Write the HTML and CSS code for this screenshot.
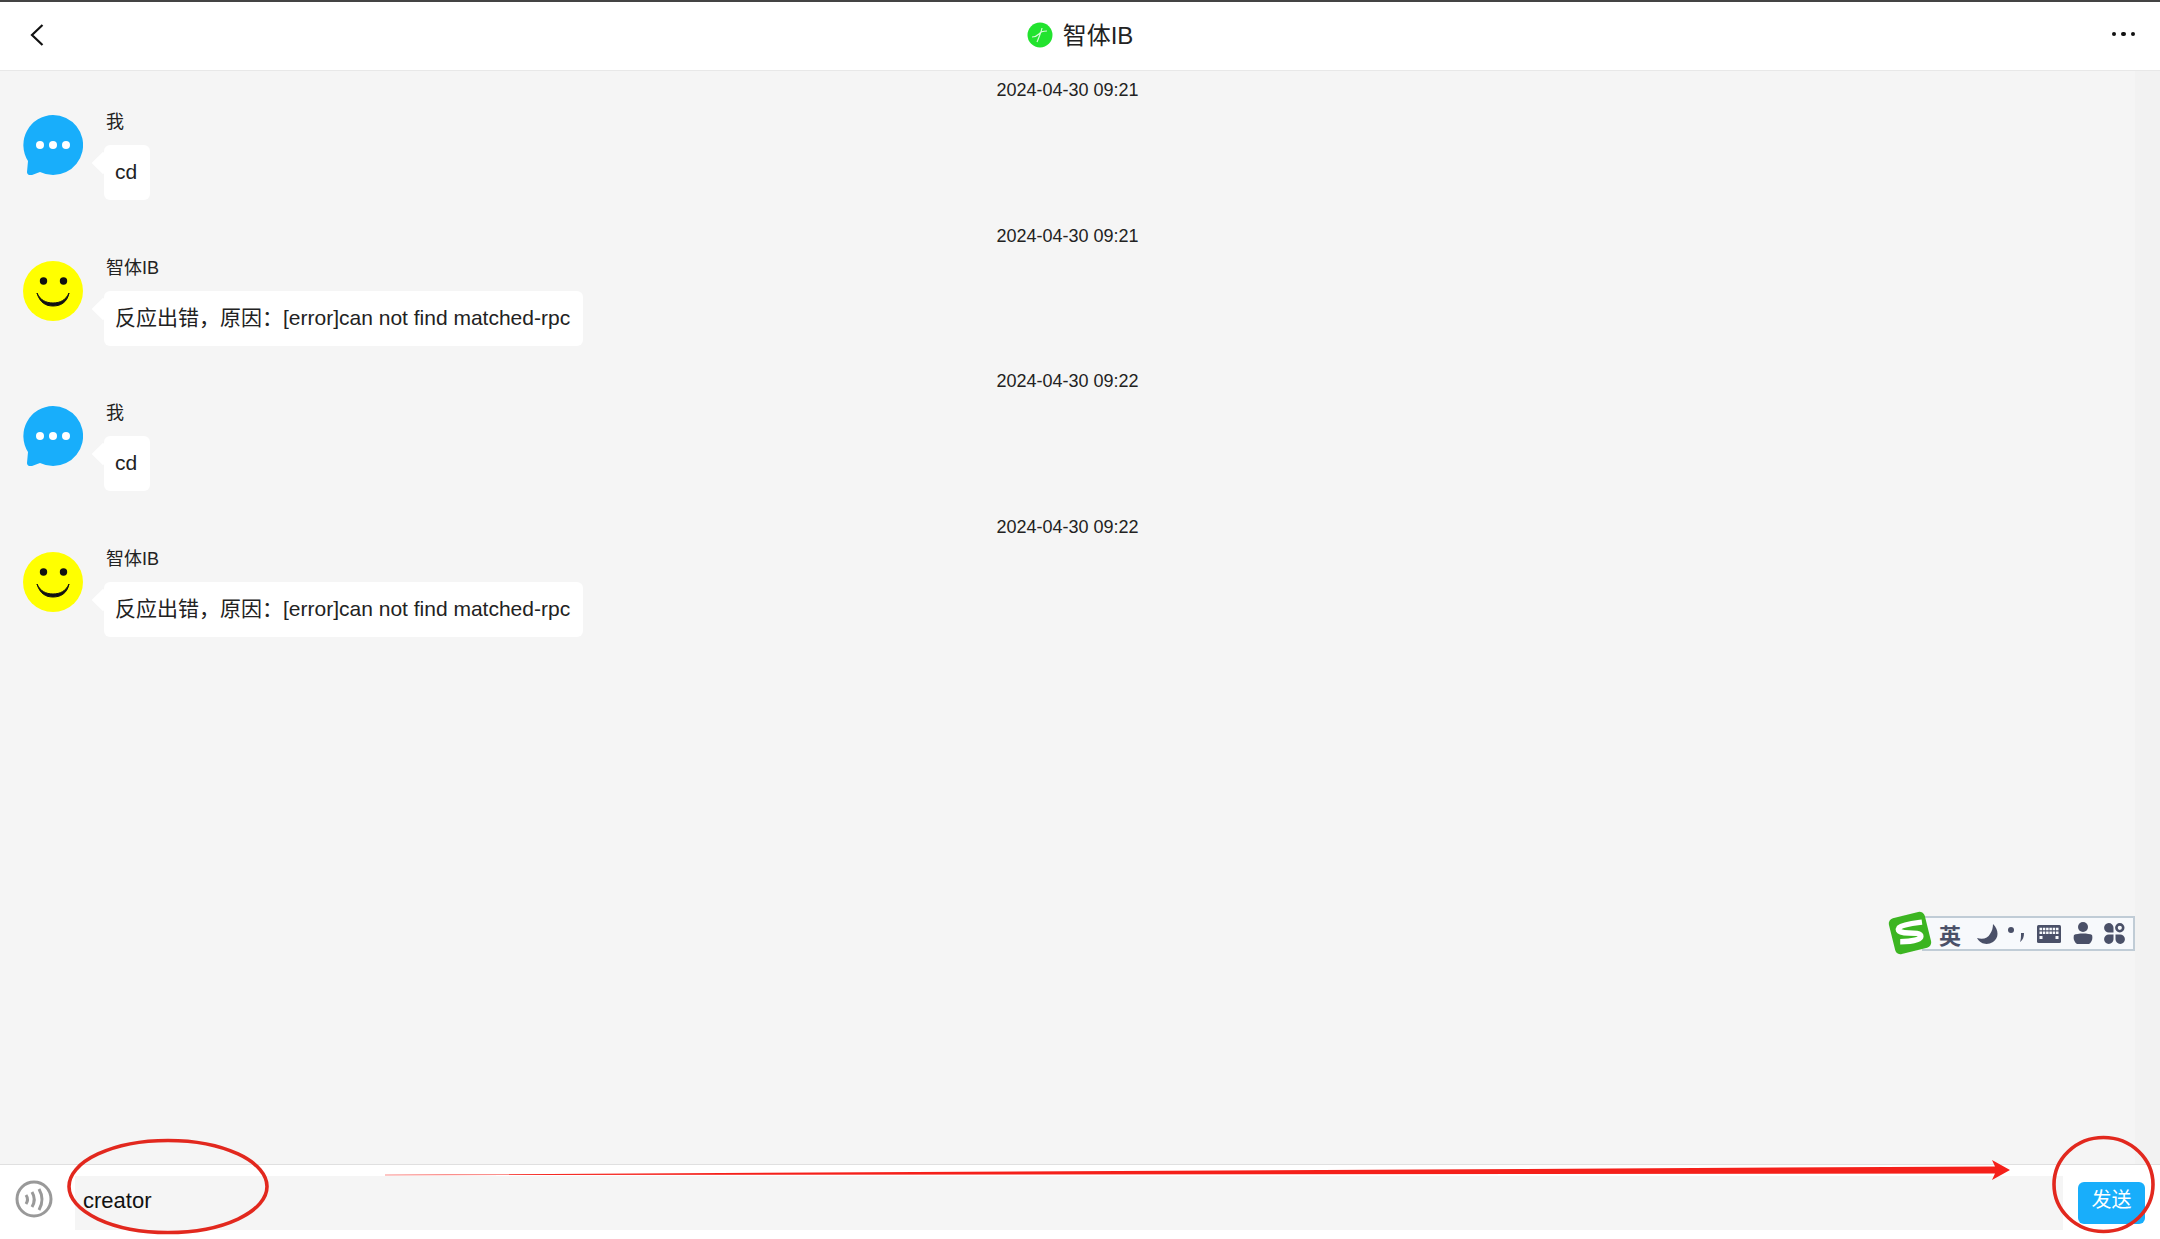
FILE: index.html
```html
<!DOCTYPE html>
<html lang="zh-CN">
<head>
  <meta charset="UTF-8">
  <title>智体IB</title>
  <link rel="stylesheet" href="styles.css">
</head>
<body>
  <div class="page">
    <header class="topbar">
      <svg class="back" width="14" height="24" viewBox="0 0 14 24"><path d="M12.5 2 2 12l10.5 10" fill="none" stroke="#111" stroke-width="2.2"/></svg>
      <div class="title">
        <svg width="26" height="26" viewBox="0 0 26 26"><circle cx="13" cy="13" r="12.5" fill="#22e32e"/><path d="M5 15c4 0 5-1 7-3s3-3 8-3M15 6c-1 5-3 9-5 14" fill="none" stroke="#d8f8d8" stroke-width="1.2"/></svg>
        <span>智体IB</span>
      </div>
      <div class="more"><i></i><i></i><i></i></div>
    </header>

    <div class="middle">
      <main class="messages">
        <section class="msg">
          <div class="time">2024-04-30 09:21</div>
          <div class="row">
            <svg class="avatar" viewBox="0 0 60 60"><path d="M30 0a30 30 0 1 1-13 57l-8 3c-3 1-5-1-5-3l1-11A30 30 0 0 1 30 0z" fill="#18aefb"/><circle cx="17" cy="30" r="4" fill="#fff"/><circle cx="30" cy="30" r="4" fill="#fff"/><circle cx="43" cy="30" r="4" fill="#fff"/></svg>
            <div class="body">
              <div class="name">我</div>
              <div class="bubble">cd</div>
            </div>
          </div>
        </section>
        <section class="msg">
          <div class="time">2024-04-30 09:21</div>
          <div class="row">
            <svg class="avatar" viewBox="0 0 60 60"><circle cx="30" cy="30" r="30" fill="#ff0"/><circle cx="20.5" cy="20" r="3.7" fill="#111"/><circle cx="40.5" cy="20" r="3.7" fill="#111"/><path d="M14 32c3 10 9 13 16 13s14-3 16-13c-3 7-9 10-16 10s-13-3-16-10z" fill="#111" stroke="#111"/></svg>
            <div class="body">
              <div class="name">智体IB</div>
              <div class="bubble">反应出错，原因：[error]can not find matched-rpc</div>
            </div>
          </div>
        </section>
        <section class="msg">
          <div class="time">2024-04-30 09:22</div>
          <div class="row">
            <svg class="avatar" viewBox="0 0 60 60"><path d="M30 0a30 30 0 1 1-13 57l-8 3c-3 1-5-1-5-3l1-11A30 30 0 0 1 30 0z" fill="#18aefb"/><circle cx="17" cy="30" r="4" fill="#fff"/><circle cx="30" cy="30" r="4" fill="#fff"/><circle cx="43" cy="30" r="4" fill="#fff"/></svg>
            <div class="body">
              <div class="name">我</div>
              <div class="bubble">cd</div>
            </div>
          </div>
        </section>
        <section class="msg">
          <div class="time">2024-04-30 09:22</div>
          <div class="row">
            <svg class="avatar" viewBox="0 0 60 60"><circle cx="30" cy="30" r="30" fill="#ff0"/><circle cx="20.5" cy="20" r="3.7" fill="#111"/><circle cx="40.5" cy="20" r="3.7" fill="#111"/><path d="M14 32c3 10 9 13 16 13s14-3 16-13c-3 7-9 10-16 10s-13-3-16-10z" fill="#111" stroke="#111"/></svg>
            <div class="body">
              <div class="name">智体IB</div>
              <div class="bubble">反应出错，原因：[error]can not find matched-rpc</div>
            </div>
          </div>
        </section>
      </main>
      <div class="scroll-track"></div>
    </div>

    <footer class="composer">
      <div class="voice">
        <svg width="38" height="38" viewBox="0 0 38 38"><circle cx="19" cy="19" r="17" fill="none" stroke="#999" stroke-width="3"/><path d="M11 15c2 3 2 6 0 9M17 12c3 5 3 10 0 15M24 9c4 7 4 14 0 21" fill="none" stroke="#999" stroke-width="3"/></svg>
      </div>
      <div class="input">creator</div>
      <button class="send">发送</button>
    </footer>
  </div>

  <!-- sogou ime toolbar floating over the page -->
  <div class="ime">
    <svg class="ime-logo" width="50" height="48" viewBox="0 0 46 44"><rect x="6" y="5" width="34" height="34" rx="5" fill="#3cb521" transform="rotate(-14 23 22)"/><path d="M34 12C26 13 16 14 13 17c-3 4 4 5 9 5s11 0 11 3-8 5-19 5" fill="none" stroke="#fff" stroke-width="5"/></svg>
    <span class="ime-lang">英</span>
    <svg class="ime-moon" width="24" height="24" viewBox="0 0 24 24"><path d="M18 2c6 6 6 14 0 18-5 3-12 3-16-4 6 2 11 0 13-4 2-3 3-6 3-10z" fill="#4a5068"/></svg>
    <svg class="ime-punct" width="18" height="20" viewBox="0 0 18 20"><circle cx="4" cy="6" r="3" fill="#4a5068"/><path d="M14 9h3c0 4-1 7-4 9 1-3 1-5 1-9z" fill="#4a5068"/></svg>
    <svg width="26" height="20" viewBox="0 0 26 20"><rect x="1" y="1" width="24" height="18" rx="1.5" fill="#4a5068"/><path d="M3.5 5h19M3.500 8.800h19" stroke="#f7f9fc" stroke-width="2.600" stroke-dasharray="2.500 .8"/><path d="M3.500 13.500h3M19.500 13.500h3" stroke="#f7f9fc" stroke-width="3"/></svg>
    <svg width="20" height="23" viewBox="0 0 20 23"><circle cx="10" cy="5" r="5" fill="#4a5068"/><path d="M1 13c3-2 15-2 18 0 1 3 0 7-3 9H4c-3-2-4-6-3-9z" fill="#4a5068"/></svg>
    <svg width="21" height="21" viewBox="0 0 21 21"><path d="M9.500 9.500H5a4.700 4.700 0 1 1 4.500-4.700zM9.500 11.500H5a4.700 4.700 0 1 0 4.500 4.700zM11.500 11.500H16a4.700 4.700 0 1 1-4.500 4.700z" fill="#4a5068"/><circle cx="15.800" cy="4.800" r="3.400" fill="none" stroke="#4a5068" stroke-width="2.600"/></svg>
  </div>

  <!-- red annotations drawn on top of the screenshot -->
  <svg class="marks" width="2160" height="1239" viewBox="0 0 2160 1239">
    <ellipse cx="168" cy="1186.500" rx="99" ry="46" fill="none" stroke="#e2281e" stroke-width="3.600"/>
    <ellipse cx="2103.500" cy="1184.500" rx="49.500" ry="47" fill="none" stroke="#e2281e" stroke-width="3.600"/>
    <path d="M385 1174.800 1995 1166.500 1992 1160 2010 1170 1992 1180 1995 1173.500 385 1175.200z" fill="#f5201a"/>
  </svg>
</body>
</html>
```

FILE: styles.css
```css
* {
  box-sizing: border-box;
}
html, body {
  margin: 0;
  height: 100%;
  overflow: hidden;
}
body {
  font-family: "Liberation Sans", "Noto Sans CJK SC", sans-serif;
  color: #222;
  background: #f5f5f5;
}
.page {
  display: flex;
  flex-direction: column;
  height: 100vh;
}

/* top bar */
.topbar {
  display: grid;
  grid-template-columns: 1fr auto 1fr;
  align-items: center;
  height: 71px;
  padding: 0 25px 2px 25px;
  background: #fff;
  border-top: 2px solid #444;
  border-bottom: 1px solid #e8e8e8;
}
.back {
  margin-left: 5px;
}
.title {
  display: flex;
  align-items: center;
  gap: 10px;
  font-size: 24px;
  color: #222;
}
.title span {
  padding-bottom: 4px;
}
.more {
  display: flex;
  justify-content: flex-end;
  gap: 5px;
  margin-bottom: 2px;
}
.more i {
  width: 4.5px;
  height: 4.5px;
  border-radius: 50%;
  background: #111;
}

/* message list */
.middle {
  flex: 1;
  display: flex;
  min-height: 0;
}
.messages {
  flex: 1;
  padding-top: 6px;
}
.scroll-track {
  width: 25px;
  background: #f2f2f2;
}
.msg {
  margin-bottom: 22.6px;
}
.time {
  font-size: 18px;
  line-height: 26px;
  text-align: center;
}
.row {
  display: flex;
  gap: 21px;
  margin-top: 8px;
  padding-left: 23px;
}
.avatar {
  width: 60px;
  height: 60px;
  margin-top: 4px;
}
.body {
  display: flex;
  flex-direction: column;
  align-items: flex-start;
}
.name {
  margin-left: 2px;
  font-size: 18px;
  line-height: 22px;
}
.bubble {
  position: relative;
  margin-top: 12px;
  padding: 0 12.5px 1px 11px;
  height: 55px;
  font-size: 21px;
  line-height: 54px;
  background: #fff;
  border-radius: 6px;
}
.bubble::before {
  content: "";
  position: absolute;
  left: -9px;
  top: 10px;
  width: 16px;
  height: 16px;
  background: #fff;
  transform: rotate(45deg);
}

/* input row */
.composer {
  display: flex;
  align-items: stretch;
  height: 75px;
  padding: 11px 15px 9px 0;
  background: #fff;
  border-top: 1px solid #e0e0e0;
}
.voice {
  display: flex;
  align-items: center;
  justify-content: center;
  width: 75px;
  padding: 0 8px 8px 0;
}
.input {
  flex: 1;
  padding: 7px 0 0 8px;
  font-size: 22px;
  line-height: 36px;
  color: #111;
  background: #f5f5f5;
}
.send {
  align-self: center;
  width: 67px;
  height: 42px;
  margin-left: 15px;
  padding: 0 0 9px;
  font-family: inherit;
  font-size: 20px;
  color: #fff;
  background: #18aefb;
  border: none;
  border-radius: 6px;
}

/* floating ime bar */
.ime {
  position: absolute;
  left: 1922px;
  top: 916px;
  display: flex;
  align-items: center;
  gap: 11px;
  width: 213px;
  height: 35px;
  padding-left: 17px;
  background: #f7f9fc;
  border: 2px solid #c0ccd6;
  border-left: none;
}
.ime-logo {
  position: absolute;
  left: -37px;
  top: -9px;
}
.ime-lang {
  font-size: 22px;
  font-weight: 700;
  color: #4a5068;
}
.ime-moon {
  margin-left: 3px;
}
.ime-punct {
  margin-left: -3px;
}

.marks {
  position: absolute;
  left: 0;
  top: 0;
  pointer-events: none;
}
```
